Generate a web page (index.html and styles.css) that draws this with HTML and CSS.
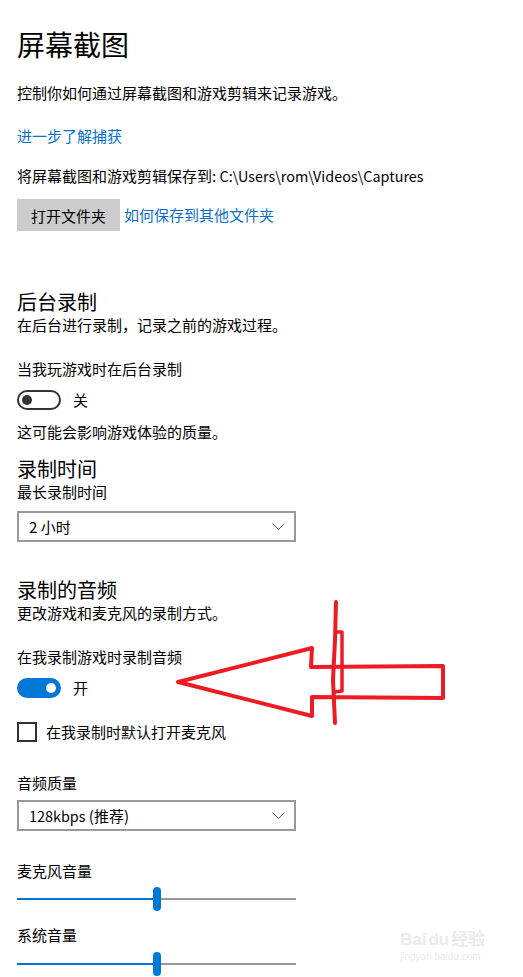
FILE: index.html
```html
<!DOCTYPE html>
<html lang="zh-CN">
<head>
    <meta charset="UTF-8">
    <meta name="viewport" content="width=device-width, initial-scale=1.0">
    <title>屏幕截图</title>
    <link rel="stylesheet" href="styles.css">
</head>
<body>
    <div class="page">
        <h1>屏幕截图</h1>
        <p class="desc">控制你如何通过屏幕截图和游戏剪辑来记录游戏。</p>
        <a class="link more-link" href="#">进一步了解捕获</a>
        <p class="save-path">将屏幕截图和游戏剪辑保存到: <span class="latin">C:\Users\rom\Videos\Captures</span></p>
        <div class="btn-row">
            <button class="open-btn">打开文件夹</button>
            <a class="link" href="#">如何保存到其他文件夹</a>
        </div>

        <!-- 后台录制 -->
        <h2 class="section-title first">后台录制</h2>
        <p class="sub">在后台进行录制，记录之前的游戏过程。</p>
        <p class="label bg-label">当我玩游戏时在后台录制</p>
        <div class="toggle-row bg-toggle">
            <span class="toggle"><span class="knob"></span></span>
            <span class="toggle-text">关</span>
        </div>
        <p class="note">这可能会影响游戏体验的质量。</p>

        <!-- 录制时间 -->
        <h2 class="section-title time-title">录制时间</h2>
        <p class="sub">最长录制时间</p>
        <div class="dropdown time-drop">
            <span>2 小时</span>
            <svg class="chevron" width="13" height="8" viewBox="0 0 13 8"><path d="M0.5 0.5 L6.5 6.5 L12.5 0.5" fill="none" stroke="#666" stroke-width="1"/></svg>
        </div>

        <!-- 录制的音频 -->
        <h2 class="section-title audio-title">录制的音频</h2>
        <p class="sub">更改游戏和麦克风的录制方式。</p>
        <p class="label audio-label">在我录制游戏时录制音频</p>
        <div class="toggle-row audio-toggle">
            <span class="toggle on"><span class="knob"></span></span>
            <span class="toggle-text">开</span>
        </div>
        <div class="check-row">
            <span class="checkbox"></span>
            <span>在我录制时默认打开麦克风</span>
        </div>

        <p class="label quality-label">音频质量</p>
        <div class="dropdown quality-drop">
            <span><span class="latin">128kbps</span> (推荐)</span>
            <svg class="chevron" width="13" height="8" viewBox="0 0 13 8"><path d="M0.5 0.5 L6.5 6.5 L12.5 0.5" fill="none" stroke="#666" stroke-width="1"/></svg>
        </div>

        <p class="label mic-label">麦克风音量</p>
        <div class="slider mic-slider">
            <span class="track-fill"></span>
            <span class="thumb"></span>
            <span class="track-rest"></span>
        </div>

        <p class="label sys-label">系统音量</p>
        <div class="slider sys-slider">
            <span class="track-fill"></span>
            <span class="thumb"></span>
            <span class="track-rest"></span>
        </div>
    </div>

    <!-- 手绘红色箭头标注 -->
    <svg class="annotation" width="523" height="977" viewBox="0 0 523 977">
        <path d="M178 682 L312 648 L311 667 L443 666 L443 698 L312 697 L312 716 Z" fill="none" stroke="#ed1c24" stroke-width="4" stroke-linejoin="round"/>
        <path d="M336 602 L335 640 L333 680 L335 723" fill="none" stroke="#ed1c24" stroke-width="4" stroke-linecap="round"/>
        <path d="M334 632 L342 632 L342 691 L334 692" fill="none" stroke="#ed1c24" stroke-width="3.5" stroke-linejoin="round"/>
    </svg>

    <div class="watermark">
        <div class="wm-logo">Bai<span class="wm-du">du</span>经验</div>
        <div class="wm-url">jingyan.baidu.com</div>
    </div>
</body>
</html>
```

FILE: styles.css
```css
html, body {
    margin: 0;
    padding: 0;
    background: #fff;
}
body {
    position: relative;
    width: 523px;
    height: 977px;
    overflow: hidden;
    font-family: "Noto Sans CJK SC", "Noto Sans", sans-serif;
    font-size: 15px;
    color: #000;
}
.page {
    padding: 24px 17px 0 17px;
}
p {
    margin: 0;
    line-height: 20px;
}
.latin {
    font-size: 14.4px;
}
h1 {
    font-size: 28px;
    font-weight: normal;
    line-height: 40px;
    margin: 0;
}
.desc {
    margin-top: 19px;
}
.link {
    color: #0a6fcc;
    text-decoration: none;
    line-height: 20px;
}
.more-link {
    display: block;
    margin-top: 23px;
}
.save-path {
    margin-top: 20px;
}
.btn-row {
    display: flex;
    align-items: center;
    gap: 4px;
    margin-top: 13px;
}
.open-btn {
    width: 103px;
    height: 32px;
    padding: 0;
    border: none;
    background: #cccccc;
    font-family: inherit;
    font-size: 15px;
    color: #000;
}
.section-title {
    font-size: 20px;
    font-weight: normal;
    line-height: 26px;
    margin: 0;
}
.section-title.first {
    margin-top: 58px;
}
.bg-label {
    margin-top: 24px;
}
.toggle-row {
    display: flex;
    align-items: center;
    height: 20px;
}
.bg-toggle {
    margin-top: 11px;
}
.toggle {
    box-sizing: border-box;
    width: 44px;
    height: 20px;
    border: 2px solid #333;
    border-radius: 10px;
    display: flex;
    align-items: center;
    padding: 0 3px;
}
.toggle .knob {
    width: 10px;
    height: 10px;
    border-radius: 50%;
    background: #333;
}
.toggle.on {
    background: #0078d7;
    border-color: #0078d7;
    justify-content: flex-end;
}
.toggle.on .knob {
    background: #fff;
}
.toggle-text {
    margin-left: 12px;
    line-height: 20px;
}
.note {
    margin-top: 12px;
}
.time-title {
    margin-top: 14px;
}
.dropdown {
    box-sizing: border-box;
    width: 279px;
    height: 31px;
    border: 2px solid #999;
    display: flex;
    align-items: center;
    justify-content: space-between;
    padding: 0 9px 0 10px;
}
.time-drop {
    margin-top: 9px;
}
.audio-title {
    margin-top: 35px;
}
.audio-label {
    margin-top: 24px;
}
.audio-toggle {
    margin-top: 11px;
}
.check-row {
    display: flex;
    align-items: center;
    gap: 9px;
    height: 20px;
    margin-top: 24px;
    line-height: 20px;
}
.checkbox {
    box-sizing: border-box;
    width: 20px;
    height: 20px;
    border: 2px solid #333;
}
.quality-label {
    margin-top: 31px;
}
.quality-drop {
    margin-top: 7px;
}
.mic-label {
    margin-top: 30px;
}
.slider {
    display: flex;
    align-items: center;
    width: 279px;
    height: 24px;
}
.track-fill {
    width: 136px;
    height: 2px;
    background: #0078d7;
}
.thumb {
    width: 8px;
    height: 24px;
    border-radius: 4px;
    background: #0078d7;
}
.track-rest {
    flex: 1;
    height: 2px;
    background: #999;
}
.mic-slider {
    margin-top: 6px;
}
.sys-label {
    margin-top: 14px;
}
.sys-slider {
    margin-top: 7px;
}
.annotation {
    position: absolute;
    left: 0;
    top: 0;
    pointer-events: none;
}
.watermark {
    position: absolute;
    left: 400px;
    top: 930px;
    color: #ebebeb;
    font-family: "Liberation Sans", "Noto Sans CJK SC", sans-serif;
}
.wm-logo {
    font-size: 17px;
    font-weight: bold;
    line-height: 20px;
}
.wm-du {
    margin: 0 2px;
}
.wm-url {
    font-size: 10px;
    line-height: 14px;
}
```
